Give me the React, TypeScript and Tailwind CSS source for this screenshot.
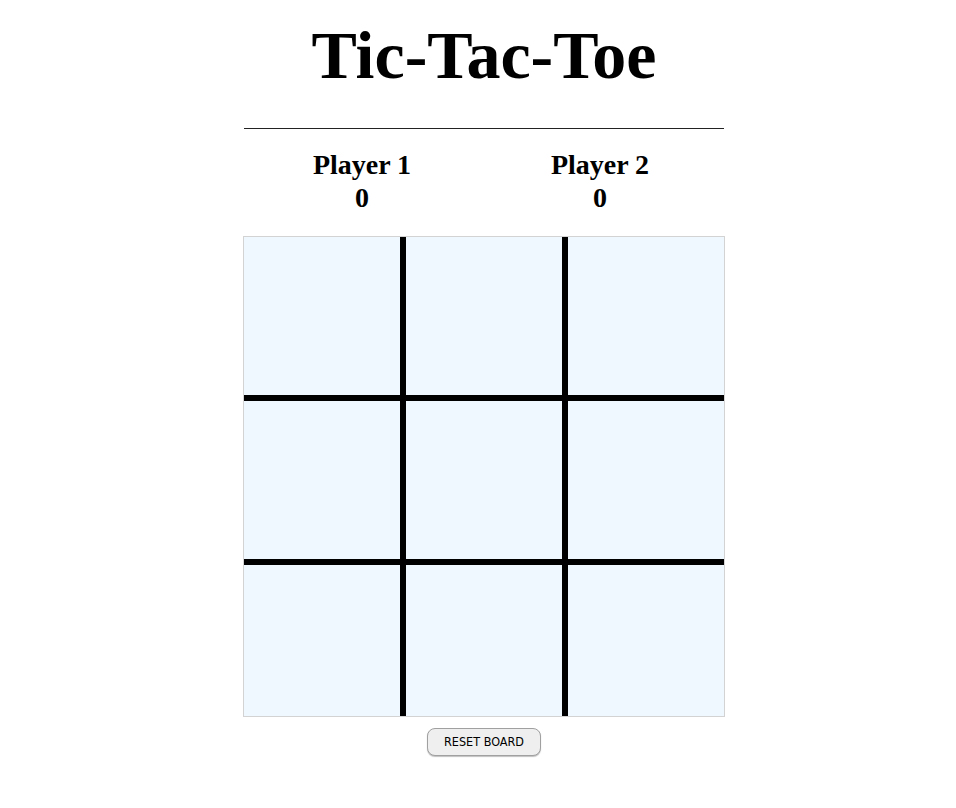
const cells = Array.from({ length: 9 }, (_, i) => i);

export default function App() {
  return (
    <div className="w-full min-h-screen bg-white text-black">
      <div className="ml-[243px] w-[482px] flex flex-col">
        <h1 className="pt-[21px] text-center font-bold text-[68px] leading-[68px] font-['Liberation_Serif',serif]">
          Tic-Tac-Toe
        </h1>
        <div className="mt-[39px] mx-[1px] h-px bg-[#222]" />
        <div className="mt-[19px] flex flex-row font-['Liberation_Serif',serif] font-bold text-[28px] leading-[33px]">
          <div className="w-[238px] text-center">
            <div>Player 1</div>
            <div>0</div>
          </div>
          <div className="w-[238px] text-center">
            <div>Player 2</div>
            <div>0</div>
          </div>
        </div>
        <div className="mt-[22px] w-[482px] h-[481px] border border-[#d3d3d3] bg-black grid grid-cols-3 grid-rows-[158px_158px_1fr] gap-[6px]">
          {cells.map((c) => (
            <div key={c} className="bg-[#f0f8ff]" />
          ))}
        </div>
        <div className="mt-[11px] flex justify-center">
          <button className="w-[114px] h-[28px] rounded-[8px] border border-[#a0a0a0] bg-[#efefef] shadow-[0_1px_1px_rgba(0,0,0,0.25)] text-[12.5px] text-black font-['DejaVu_Sans_Condensed','Liberation_Sans',sans-serif]">
            RESET BOARD
          </button>
        </div>
      </div>
    </div>
  );
}
